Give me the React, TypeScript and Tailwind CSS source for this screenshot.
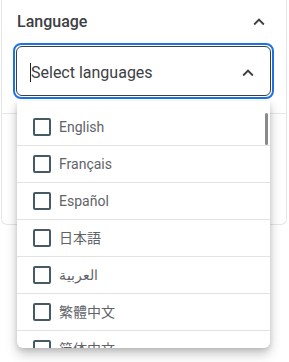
import React from "react";

const Chevron = ({ className }: { className?: string }) => (
  <svg viewBox="0 0 24 24" className={className} fill="currentColor">
    <path d="M12 8l-6 6 1.41 1.41L12 10.83l4.59 4.58L18 14z" />
  </svg>
);

const items = ["English", "Français", "Español", "日本語", "العربية", "繁體中文", "简体中文"];

export default function App() {
  return (
    <div
      className="relative w-[289px] h-[362px] bg-white overflow-hidden"
      style={{ fontFamily: 'Roboto, "Noto Sans CJK JP", "Noto Sans", sans-serif' }}
    >
      <div className="ml-px w-[286px] border-x border-b border-[#e6e6e6] rounded-b-[6px] bg-white">
        <div className="h-[114px] border-b border-[#e6e6e6]">
          <div className="h-[43px] flex items-center justify-between pl-[15px] pr-[16px]">
            <span className="text-[16px] font-medium text-[#3c4043] leading-none">Language</span>
            <Chevron className="w-[22px] h-[22px] text-[#3c4043]" />
          </div>
          <div className="ml-[11px] w-[261px] h-[56px] rounded-[8px] border-2 border-[#1a73e8] p-px">
            <div className="h-full rounded-[6px] border border-[#3c4043] flex items-center justify-between pl-[13px] pr-[11px] pt-[3px]">
              <div className="flex items-center">
                <span className="w-px h-[19px] bg-[#202124]" />
                <span className="text-[16px] text-[#3c4043]">Select languages</span>
              </div>
              <Chevron className="w-[22px] h-[22px] text-[#3c4043]" />
            </div>
          </div>
        </div>
        <div className="h-[110px]" />
      </div>

      <div className="absolute left-[17px] top-[101px] w-[253px] h-[247px] bg-white rounded-b-[6px] overflow-hidden shadow-[0_6px_12px_rgba(0,0,0,0.22),0_2px_5px_rgba(0,0,0,0.12)]">
        <div className="pt-[8px]">
          {items.map((it) => (
            <div key={it} className="h-[37px] border-b border-[#e2e2e2] flex items-center pl-[16px]">
              <span className="w-[18px] h-[18px] border-2 border-[#455a64] rounded-[2px] shrink-0" />
              <span className="ml-[8px] text-[14px] text-[#5f6368]">{it}</span>
            </div>
          ))}
        </div>
        <div className="absolute left-[248px] top-[12px] w-[3px] h-[32px] rounded-full bg-[#8a8a8a]" />
      </div>
    </div>
  );
}
